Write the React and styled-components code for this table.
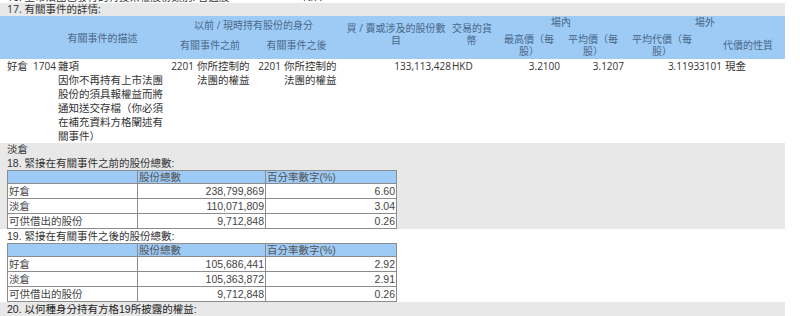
import styled, { createGlobalStyle } from "styled-components";

const GlobalStyle = createGlobalStyle`
  body {
    margin: 0;
    background: #ffffff;
  }
`;

const eventCols = [31, 27, 109, 28, 58, 29, 58, 112, 45, 64, 64, 98, 62];

const reasonLines = [
  "雜項",
  "因你不再持有上市法團",
  "股份的須具報權益而將",
  "通知送交存檔（你必須",
  "在補充資料方格闡述有",
  "關事件）",
];

const beforeRows = [
  ["好倉", "238,799,869", "6.60"],
  ["淡倉", "110,071,809", "3.04"],
  ["可供借出的股份", "9,712,848", "0.26"],
];

const afterRows = [
  ["好倉", "105,686,441", "2.92"],
  ["淡倉", "105,363,872", "2.91"],
  ["可供借出的股份", "9,712,848", "0.26"],
];

const lines = (arr) =>
  arr.map((l, i) => (
    <span key={i}>
      {i > 0 && <br />}
      {l}
    </span>
  ));

const StatBlock = ({ title, rows }) => (
  <>
    <Heading $h={14} $font="table">
      {title}
    </Heading>
    <StatTable>
      <colgroup>
        <col style={{ width: 130 }} />
        <col style={{ width: 128 }} />
        <col style={{ width: 131 }} />
      </colgroup>
      <thead>
        <tr>
          <StatTh />
          <StatTh>股份總數</StatTh>
          <StatTh>百分率數字(%)</StatTh>
        </tr>
      </thead>
      <tbody>
        {rows.map((r) => (
          <tr key={r[0]}>
            <StatTd>{r[0]}</StatTd>
            <StatTd $right>{r[1]}</StatTd>
            <StatTd $right>{r[2]}</StatTd>
          </tr>
        ))}
      </tbody>
    </StatTable>
  </>
);

const App = () => {
  return (
    <Page>
      <GlobalStyle />
      <CutLine>
        <span>16. 上市法團已發行的有投票權股份類別: 普通股　　　　　　　N/A</span>
      </CutLine>

      <Band $gray>
        <Heading $h={13}>17. 有關事件的詳情:</Heading>
      </Band>

      <EventTable>
        <colgroup>
          {eventCols.map((w, i) => (
            <col key={i} style={{ width: w }} />
          ))}
        </colgroup>
        <thead>
          <tr>
            <HeadCell colSpan={3} rowSpan={2} $pl={38}>
              有關事件的描述
            </HeadCell>
            <HeadCell colSpan={4} $h={15} $valign="bottom">
              以前 / 現時持有股份的身分
            </HeadCell>
            <HeadCell rowSpan={2} $valign="top" $pt={6}>
              {lines(["買 / 賣或涉及的股份數", "目"])}
            </HeadCell>
            <HeadCell rowSpan={2} $valign="top" $pt={6} $pr={6}>
              {lines(["交易的貨", "幣"])}
            </HeadCell>
            <HeadCell colSpan={2} $h={15} $valign="top">
              場內
            </HeadCell>
            <HeadCell colSpan={2} $h={15} $valign="top">
              場外
            </HeadCell>
          </tr>
          <tr>
            <HeadCell colSpan={2} $h={28}>
              有關事件之前
            </HeadCell>
            <HeadCell colSpan={2}>有關事件之後</HeadCell>
            <HeadCell>{lines(["最高價（每", "股）"])}</HeadCell>
            <HeadCell>{lines(["平均價（每", "股）"])}</HeadCell>
            <HeadCell $pr={24}>{lines(["平均代價（每", "股）"])}</HeadCell>
            <HeadCell $pr={24}>代價的性質</HeadCell>
          </tr>
        </thead>
        <tbody>
          <tr>
            <DataCell $pl={7}>好倉</DataCell>
            <DataCell $num>1704</DataCell>
            <DataCell $pl={0}>{lines(reasonLines)}</DataCell>
            <DataCell $num $right>
              2201
            </DataCell>
            <DataCell>你所控制的法團的權益</DataCell>
            <DataCell $num $right>
              2201
            </DataCell>
            <DataCell>你所控制的法團的權益</DataCell>
            <DataCell $num $right>
              133,113,428
            </DataCell>
            <DataCell $num $pl={0}>
              HKD
            </DataCell>
            <DataCell $num $right>
              3.2100
            </DataCell>
            <DataCell $num $right>
              3.1207
            </DataCell>
            <DataCell $num $right>
              3.11933101
            </DataCell>
            <DataCell>現金</DataCell>
          </tr>
        </tbody>
      </EventTable>

      <Band $gray>
        <Heading $h={13}>淡倉</Heading>
        <StatBlock title="18. 緊接在有關事件之前的股份總數:" rows={beforeRows} />
      </Band>

      <Band>
        <StatBlock title="19. 緊接在有關事件之後的股份總數:" rows={afterRows} />
      </Band>

      <Band $gray>
        <Heading $h={15} $font="table" $dark>
          20. 以何種身分持有方格19所披露的權益:
        </Heading>
      </Band>
    </Page>
  );
};

export default App;

const Page = styled.div`
  width: 785px;
  color: #333333;
  font-family: "Open Sans", "Noto Sans CJK TC", sans-serif;
  font-size: 10.5px;
`;

const CutLine = styled.div`
  height: 3px;
  overflow: hidden;
  display: flex;
  align-items: flex-end;
  padding-left: 7px;
  line-height: 12px;
  white-space: nowrap;
`;

const Band = styled.div`
  background: ${(p) => (p.$gray ? "#e8e8e8" : "#ffffff")};
  padding-left: 7px;
`;

const Heading = styled.div`
  height: ${(p) => p.$h}px;
  line-height: ${(p) => p.$h}px;
  white-space: nowrap;
  color: ${(p) => (p.$dark ? "#222222" : "#333333")};
  font-family: ${(p) =>
    p.$font === "table"
      ? `"Liberation Sans", "Noto Sans CJK TC", sans-serif`
      : `"Open Sans", "Noto Sans CJK TC", sans-serif`};
`;

const EventTable = styled.table`
  width: 785px;
  table-layout: fixed;
  border-collapse: collapse;
  border-spacing: 0;
`;

const HeadCell = styled.th`
  height: ${(p) => (p.$h ? `${p.$h}px` : "auto")};
  padding: ${(p) => p.$pt || 0}px ${(p) => p.$pr || 0}px 0
    ${(p) => p.$pl || 0}px;
  background: #9dcbf6;
  color: #4a6888;
  font-size: 10px;
  font-weight: normal;
  line-height: 12px;
  text-align: center;
  vertical-align: ${(p) => p.$valign || "middle"};
  white-space: nowrap;
`;

const DataCell = styled.td`
  padding: 0 1px 0 ${(p) => p.$pl ?? 2}px;
  vertical-align: top;
  line-height: 14px;
  font-size: ${(p) => (p.$num ? "10px" : "10.5px")};
  text-align: ${(p) => (p.$right ? "right" : "left")};
  color: #333333;
`;

const StatTable = styled.table`
  width: 389px;
  table-layout: fixed;
  border-collapse: collapse;
  border: 1px solid #8c8c8c;
  font-family: "Liberation Sans", "Noto Sans CJK TC", sans-serif;
  font-size: 10.5px;
  background: #ffffff;
`;

const StatTh = styled.th`
  height: 12px;
  padding: 0 1px;
  border: 1px solid #8c8c8c;
  background: #9dcbf6;
  color: #555555;
  font-weight: normal;
  line-height: 12px;
  text-align: left;
`;

const StatTd = styled.td`
  height: 14px;
  padding: 0 1px;
  border: 1px solid #8c8c8c;
  line-height: 14px;
  color: #444444;
  text-align: ${(p) => (p.$right ? "right" : "left")};
  white-space: nowrap;
`;
